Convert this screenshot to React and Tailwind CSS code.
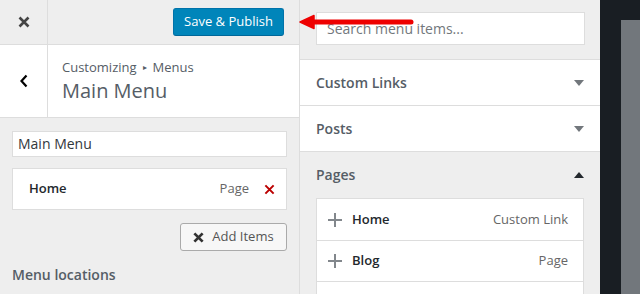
import React from "react";

const font = { fontFamily: '"Open Sans", "Noto Sans", sans-serif' };

function Caret({ up, color }) {
  return (
    <svg width="10" height="6" viewBox="0 0 10 6">
      {up ? <path d="M0 6 L5 0 L10 6 Z" fill={color} /> : <path d="M0 0 L10 0 L5 6 Z" fill={color} />}
    </svg>
  );
}

function XIcon({ size = 12, color = "#444", stroke = 2.4 }) {
  return (
    <svg width={size} height={size} viewBox="0 0 12 12">
      <path d="M1.5 1.5 L10.5 10.5 M10.5 1.5 L1.5 10.5" stroke={color} strokeWidth={stroke} strokeLinecap="butt" />
    </svg>
  );
}

function Plus() {
  return (
    <svg width="16" height="16" viewBox="0 0 16 16">
      <path d="M8 1 V15 M1 8 H15" stroke="#82878c" strokeWidth="2" />
    </svg>
  );
}

export default function App() {
  return (
    <div className="relative flex w-[640px] h-[294px] overflow-hidden text-[13px]" style={font}>
      {/* Left panel */}
      <div className="w-[300px] shrink-0 bg-[#eeeeee] border-r border-[#dddddd] flex flex-col">
        <div className="h-[45px] shrink-0 flex border-b border-[#dddddd]">
          <div className="w-[48px] border-r border-[#dddddd] flex items-center justify-center">
            <XIcon size={12} color="#444" stroke={2.6} />
          </div>
          <div className="flex-1 flex items-center justify-end pr-[15px]">
            <button className="h-[28px] w-[111px] rounded-[3px] bg-[#0085ba] border border-[#0073aa] border-b-[#006799] text-white text-[13px] flex items-center justify-center">
              Save &amp; Publish
            </button>
          </div>
        </div>
        <div className="h-[73px] shrink-0 flex bg-white border-b border-[#dddddd]">
          <div className="w-[48px] border-r border-[#dddddd] flex items-center justify-center">
            <svg width="10" height="14" viewBox="0 0 10 14">
              <path d="M7.5 1.5 L2.5 7 L7.5 12.5" stroke="#000" strokeWidth="2.2" fill="none" />
            </svg>
          </div>
          <div className="flex-1 pl-[14px] pt-[13px] text-[#555d66]">
            <div className="text-[13px] leading-[18px] flex items-center">
              Customizing
              <span className="mx-[6px] text-[8px]">▸</span>
              Menus
            </div>
            <div className="text-[20px] leading-[26px] mt-[2px]">Main Menu</div>
          </div>
        </div>
        <div className="px-[12px] pt-[13px] flex flex-col shrink-0">
          <div className="h-[26px] shrink-0 bg-white border border-[#dddddd] pl-[5px] text-[14px] text-[#32373c] leading-[24px]">
            Main Menu
          </div>
          <div className="mt-[11px] h-[42px] shrink-0 bg-white border border-[#dddddd] flex items-center pl-[16px] pr-[10px]">
            <span className="font-semibold text-[13px] text-[#23282d]">Home</span>
            <span className="ml-auto text-[13px] text-[#666]">Page</span>
            <span className="ml-[15px] mr-[1px] flex items-center">
              <XIcon size={11} color="#b00" stroke={2.2} />
            </span>
          </div>
          <div className="mt-[13px] flex justify-end shrink-0">
            <button className="h-[28px] w-[107px] rounded-[3px] bg-[#f7f7f7] border border-[#aaa] text-[#555] text-[13px] flex items-center justify-center gap-[8px]">
              <XIcon size={11} color="#333" stroke={3} />
              Add Items
            </button>
          </div>
          <div className="mt-[13px] text-[14px] font-semibold text-[#555d66]">Menu locations</div>
        </div>
      </div>

      {/* Right panel */}
      <div className="w-[300px] shrink-0 bg-[#eeeeee] flex flex-col">
        <div className="shrink-0 pt-[12px] pl-[16px] pr-[15px] pb-[14px] border-b border-[#dddddd]">
          <div className="h-[33px] bg-white border border-[#dddddd] pl-[10px] flex items-center text-[14px] text-[#72777c]">
            Search menu items...
          </div>
        </div>
        <div className="h-[46px] shrink-0 bg-white border-b border-[#dddddd] flex items-center pl-[16px] pr-[16px]">
          <span className="text-[14px] font-semibold text-[#555d66]">Custom Links</span>
          <span className="ml-auto"><Caret color="#72777c" /></span>
        </div>
        <div className="h-[46px] shrink-0 bg-white border-b border-[#dddddd] flex items-center pl-[16px] pr-[16px]">
          <span className="text-[14px] font-semibold text-[#555d66]">Posts</span>
          <span className="ml-auto"><Caret color="#72777c" /></span>
        </div>
        <div className="h-[46px] shrink-0 flex items-center pl-[16px] pr-[16px] pb-[1px]">
          <span className="text-[14px] font-semibold text-[#555d66]">Pages</span>
          <span className="ml-auto"><Caret up color="#23282d" /></span>
        </div>
        <div className="shrink-0 ml-[16px] mr-[16px] bg-white border border-[#dddddd] border-b-0">
          <div className="h-[42px] border-b border-[#dddddd] flex items-center pl-[10px] pr-[15px]">
            <Plus />
            <span className="ml-[9px] font-semibold text-[13px] text-[#23282d]">Home</span>
            <span className="ml-auto text-[13px] text-[#666]">Custom Link</span>
          </div>
          <div className="h-[41px] border-b border-[#dddddd] flex items-center pl-[10px] pr-[15px]">
            <Plus />
            <span className="ml-[9px] font-semibold text-[13px] text-[#23282d]">Blog</span>
            <span className="ml-auto text-[13px] text-[#666]">Page</span>
          </div>
          <div className="h-[41px]" />
        </div>
      </div>

      {/* Preview strip */}
      <div className="flex-1 bg-[#191e23] flex pl-[21px] pt-[20px]">
        <div className="flex-1 bg-[#72777c]" />
      </div>

      {/* Red arrow annotation */}
      <svg className="absolute left-[299px] top-[14px]" width="118" height="16" viewBox="0 0 118 16">
        <path d="M1 8 L15 1.5 L15 14.5 Z" fill="#ee0000" strokeLinejoin="round" stroke="#ee0000" strokeWidth="1.5" />
        <path d="M12 8 L112 8" stroke="#ee0000" strokeWidth="5" strokeLinecap="round" />
      </svg>
    </div>
  );
}
